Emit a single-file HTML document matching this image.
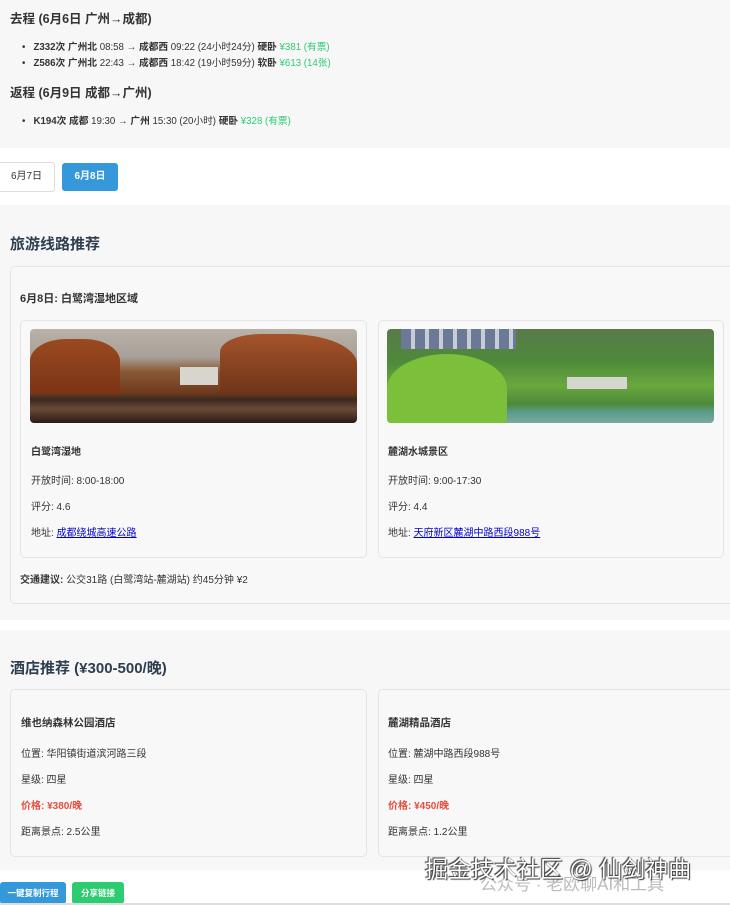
<!DOCTYPE html>
<html><head><meta charset="utf-8">
<style>
*{margin:0;padding:0;box-sizing:border-box}
body{width:730px;height:905px;background:#fff;font-family:"Liberation Sans","Noto Sans CJK SC",sans-serif;color:#333;position:relative;overflow:hidden}
.a{position:absolute;white-space:nowrap}
.gray{position:absolute;left:0;width:730px;background:#f7f7f7}
.card{position:absolute;background:#f8f8f8;border:1px solid #e4e4e4;border-radius:5px}
.h3{font-size:12.5px;font-weight:bold;color:#333}
.s{font-size:10px;color:#333}
.g{color:#2ecc71}
.h2{font-size:15px;font-weight:bold;color:#2c3e50}
.b{font-weight:bold}
a{color:#00c;text-decoration:underline}
.btn{position:absolute;border-radius:3px;font-size:9.5px;font-weight:bold;color:#fff;text-align:center}
</style></head><body>
<div class="gray" style="top:0;height:148px"></div>
<div class="a h3" style="left:10px;top:8px">去程 (6月6日 广州→成都)</div>
<div class="a s" style="left:22px;top:39px;font-size:9.7px">•&nbsp;&nbsp;&nbsp;<b>Z332次 广州北</b> 08:58 → <b>成都西</b> 09:22 (24小时24分) <b>硬卧</b> <span class="g">¥381 (有票)</span></div>
<div class="a s" style="left:22px;top:55px;font-size:9.7px">•&nbsp;&nbsp;&nbsp;<b>Z586次 广州北</b> 22:43 → <b>成都西</b> 18:42 (19小时59分) <b>软卧</b> <span class="g">¥613 (14张)</span></div>
<div class="a h3" style="left:10px;top:82px">返程 (6月9日 成都→广州)</div>
<div class="a s" style="left:22px;top:113px;font-size:9.7px">•&nbsp;&nbsp;&nbsp;<b>K194次 成都</b> 19:30 → <b>广州</b> 15:30 (20小时) <b>硬卧</b> <span class="g">¥328 (有票)</span></div>

<div class="a" style="left:-2px;top:162px;width:57px;height:30px;border:1px solid #ddd;border-radius:3px;font-size:10px;line-height:28px;text-align:center;background:#fff">6月7日</div>
<div class="btn" style="left:62px;top:163px;width:56px;height:28px;line-height:28px;background:#3498db;font-size:10px">6月8日</div>

<div class="gray" style="top:205px;height:415px"></div>
<div class="a h2" style="left:10px;top:233px">旅游线路推荐</div>
<div class="card" style="left:10px;top:266px;width:730px;height:338px"></div>
<div class="a h3" style="left:20px;top:290px;font-size:11px">6月8日: 白鹭湾湿地区域</div>

<div class="card" style="left:20px;top:320px;width:347px;height:238px"></div>
<div class="a" style="left:30px;top:329px;width:327px;height:94px;border-radius:4px;overflow:hidden;background:linear-gradient(180deg,#b9b2a8 0%,#a8a098 30%,#8a5a36 45%,#6e3a1c 68%,#3a2a20 75%,#6a4a36 85%,#2b1c14 100%)">
<div style="position:absolute;left:0;top:10px;width:90px;height:55px;background:linear-gradient(180deg,#9a4a20,#7a3416);border-radius:40% 40% 0 0"></div>
<div style="position:absolute;left:190px;top:5px;width:137px;height:60px;background:linear-gradient(180deg,#a5542a,#6e3418);border-radius:30% 50% 0 0"></div>
<div style="position:absolute;left:150px;top:38px;width:38px;height:18px;background:#d8d4ce"></div>
</div>
<div class="a s b" style="left:31px;top:443px">白鹭湾湿地</div>
<div class="a s" style="left:31px;top:472px">开放时间: 8:00-18:00</div>
<div class="a s" style="left:31px;top:498px">评分: 4.6</div>
<div class="a s" style="left:31px;top:524px">地址: <a>成都绕城高速公路</a></div>

<div class="card" style="left:378px;top:320px;width:346px;height:238px"></div>
<div class="a" style="left:387px;top:329px;width:327px;height:94px;border-radius:4px;overflow:hidden;background:linear-gradient(180deg,#5a7a4a 0%,#4e8a3a 35%,#6aa83e 60%,#4d8a3a 80%,#5a9a8a 88%,#7aaaa0 100%)">
<div style="position:absolute;left:14px;top:0;width:115px;height:20px;background:repeating-linear-gradient(90deg,#6a7a96 0 10px,#c8ccd4 10px 14px)"></div>
<div style="position:absolute;left:0;top:25px;width:120px;height:69px;background:#7cbf3a;border-radius:50% 50% 0 0"></div>
<div style="position:absolute;left:180px;top:48px;width:60px;height:12px;background:#d6d6d0"></div>
</div>
<div class="a s b" style="left:388px;top:443px">麓湖水城景区</div>
<div class="a s" style="left:388px;top:472px">开放时间: 9:00-17:30</div>
<div class="a s" style="left:388px;top:498px">评分: 4.4</div>
<div class="a s" style="left:388px;top:524px">地址: <a>天府新区麓湖中路西段988号</a></div>
<div class="a s" style="left:20px;top:571px"><b>交通建议:</b> 公交31路 (白鹭湾站-麓湖站) 约45分钟 ¥2</div>

<div class="gray" style="top:630px;height:240px"></div>
<div class="a h2" style="left:10px;top:657px">酒店推荐 (¥300-500/晚)</div>
<div class="card" style="left:10px;top:689px;width:357px;height:168px"></div>
<div class="a s b" style="left:21px;top:715px;font-size:10.5px">维也纳森林公园酒店</div>
<div class="a s" style="left:21px;top:745px">位置: 华阳镇街道滨河路三段</div>
<div class="a s" style="left:21px;top:771px">星级: 四星</div>
<div class="a s b" style="left:21px;top:797px;color:#e74c3c">价格: ¥380/晚</div>
<div class="a s" style="left:21px;top:823px">距离景点: 2.5公里</div>
<div class="card" style="left:378px;top:689px;width:360px;height:168px"></div>
<div class="a s b" style="left:388px;top:715px;font-size:10.5px">麓湖精品酒店</div>
<div class="a s" style="left:388px;top:745px">位置: 麓湖中路西段988号</div>
<div class="a s" style="left:388px;top:771px">星级: 四星</div>
<div class="a s b" style="left:388px;top:797px;color:#e74c3c">价格: ¥450/晚</div>
<div class="a s" style="left:388px;top:823px">距离景点: 1.2公里</div>

<div class="a" style="left:480px;top:870px;font-size:17px;color:#bbb">公众号 · 老欧聊AI和工具</div>
<div class="a" style="left:425px;top:850px;font-size:23px;color:#fff;text-shadow:1px 1px 1px #333,-1px -1px 1px #333">掘金技术社区 @ 仙剑神曲</div>

<div class="btn" style="left:0;top:882px;width:66px;height:22px;line-height:22px;background:#3498db;font-size:8.5px">一键复制行程</div>
<div class="btn" style="left:72px;top:882px;width:52px;height:22px;line-height:22px;background:#2ecc71;font-size:8.5px">分享链接</div>
<div class="a" style="left:0;top:903px;width:730px;height:2px;background:#ddd"></div>
</body></html>
